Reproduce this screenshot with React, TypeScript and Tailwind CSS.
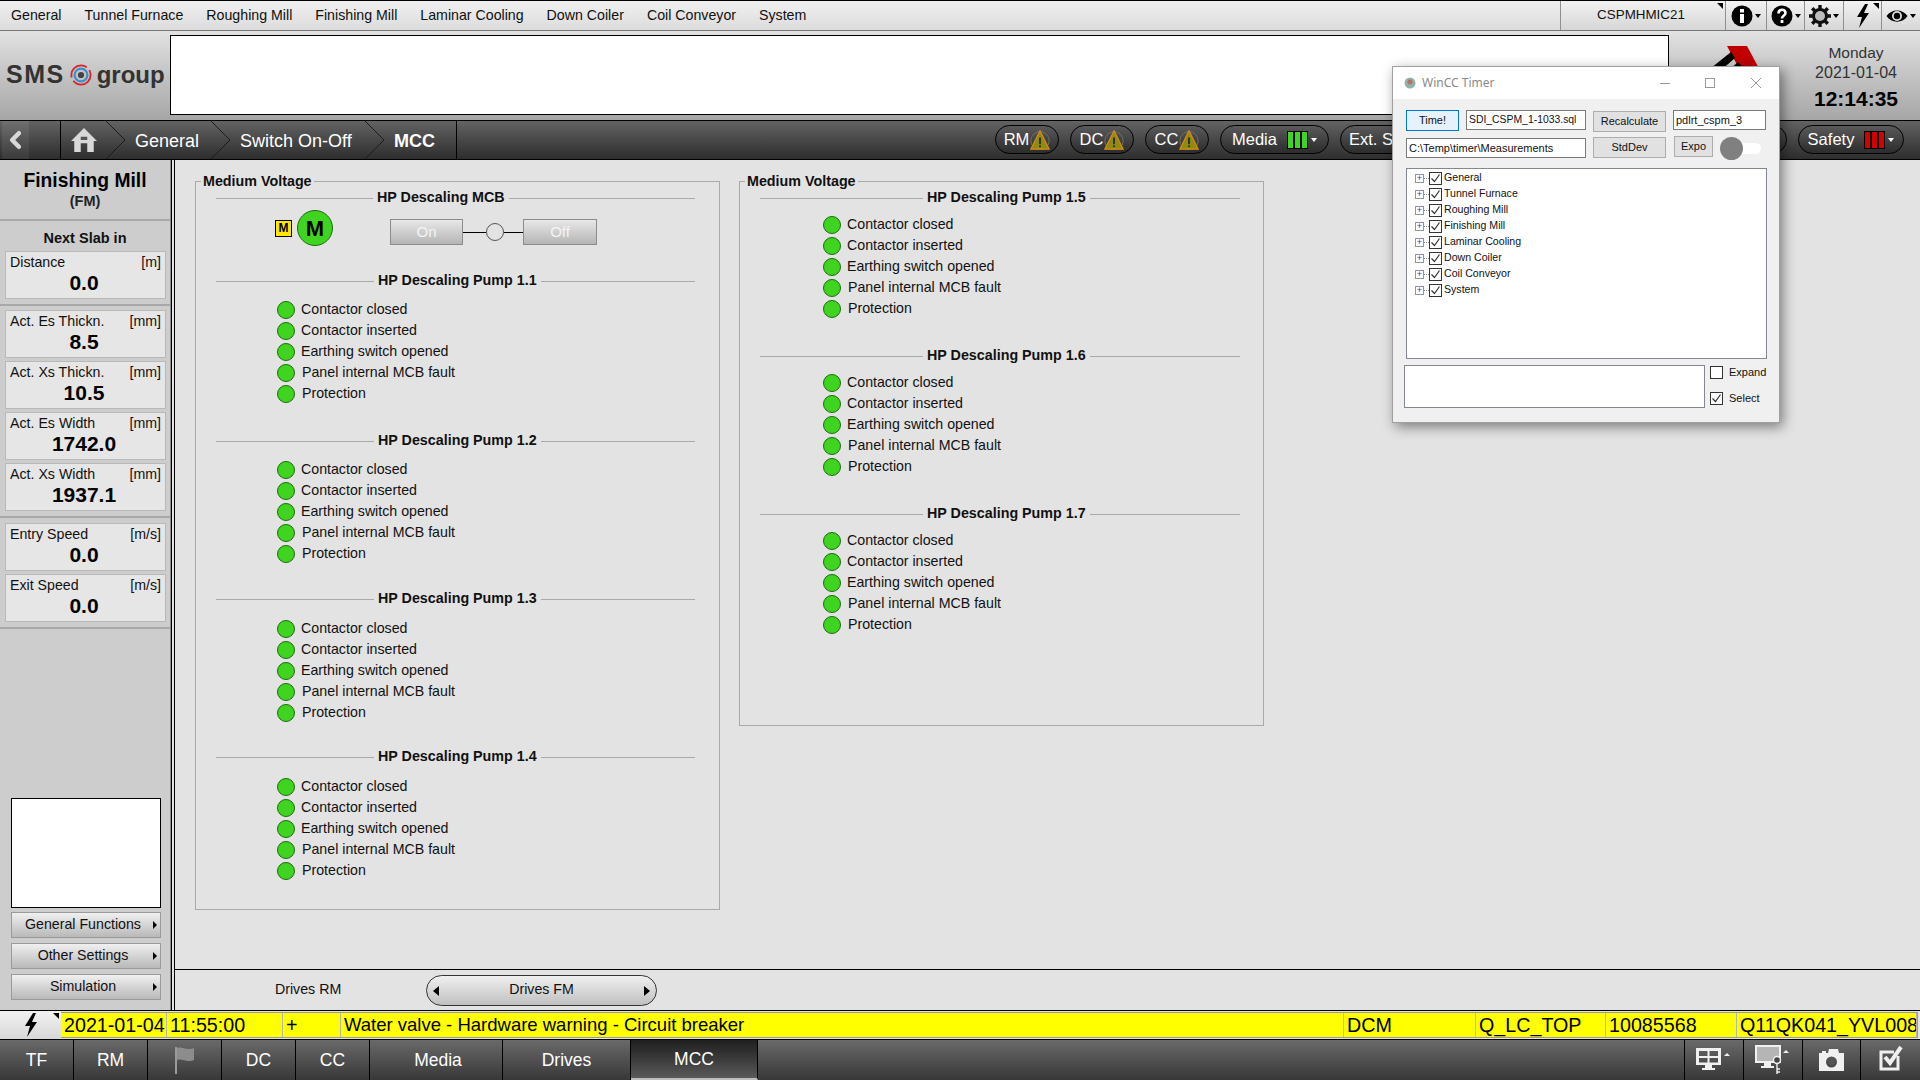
import { ChevronLeft } from "lucide-react";

const FONT = "[font-family:'Liberation_Sans',Arial,sans-serif]";

const MENU = ["General", "Tunnel Furnace", "Roughing Mill", "Finishing Mill", "Laminar Cooling", "Down Coiler", "Coil Conveyor", "System"];
const SIGNALS = ["Contactor closed", "Contactor inserted", "Earthing switch opened", "Panel internal MCB fault", "Protection"];
const TREE = ["General", "Tunnel Furnace", "Roughing Mill", "Finishing Mill", "Laminar Cooling", "Down Coiler", "Coil Conveyor", "System"];

function Corner() {
  return <span className="absolute top-[2px] right-[2px] w-0 h-0 border-t-[6px] border-l-[6px] border-t-black border-l-transparent" />;
}

function Caret() {
  return <span className="ml-[2px] mt-[1px] w-0 h-0 border-x-[3px] border-t-[4px] border-x-transparent border-t-black" />;
}

function TopTool({ children, width, corner }: { children: React.ReactNode; width: string; corner?: boolean }) {
  return (
    <div className={`relative flex items-center justify-center h-full border-l border-[#8f8f8f] bg-gradient-to-b from-[#f2f2f2] to-[#d6d6d6] ${width}`}>
      {children}
      {corner && <Corner />}
    </div>
  );
}

function Warn() {
  return (
    <svg width="20" height="20" viewBox="0 0 24 24" className="ml-[1px]">
      <circle cx="12" cy="13" r="11" fill="none" stroke="#777" strokeWidth="1" />
      <path d="M12 1 L23 23 H1 Z" fill="#8f8a12" stroke="#d98a17" strokeWidth="1.5" />
      <rect x="11" y="9" width="2" height="8" fill="#222" />
      <rect x="11" y="18.5" width="2" height="2" fill="#222" />
    </svg>
  );
}

function Pill({ children, width }: { children: React.ReactNode; width: string }) {
  return (
    <div className={`flex items-center justify-center h-[29px] rounded-full border border-black bg-gradient-to-b from-[#5a5a5a] to-[#2c2c2c] text-white text-[16.5px] shrink-0 ${width}`}>
      {children}
    </div>
  );
}

function Bars({ color }: { color: string }) {
  return (
    <span className="flex ml-[10px] gap-[2px] bg-black p-[1px]">
      <span className={`w-[5px] h-[16px] ${color}`} />
      <span className={`w-[5px] h-[16px] ${color}`} />
      <span className={`w-[5px] h-[16px] ${color}`} />
    </span>
  );
}

function DataCard({ label, unit, value }: { label: string; unit: string; value: string }) {
  return (
    <div className="mx-[5px] w-[161px] h-[48px] border border-[#b9b9b9] bg-[#e6e6e6]">
      <div className="flex justify-between px-[4px] pt-[2px] text-[14.2px] leading-[17px] text-[#111]">
        <span>{label}</span>
        <span>{unit}</span>
      </div>
      <div className="text-center text-[21px] leading-[24px] font-bold text-black pr-[3px]">{value}</div>
    </div>
  );
}

function SideButton({ label }: { label: string }) {
  return (
    <div className="relative mx-[11px] w-[150px] h-[26px] flex items-center justify-center pr-[6px] border border-[#9a9a9a] bg-gradient-to-b from-[#f0f0f0] to-[#b9b9b9] text-[14.2px] text-[#111]">
      {label}
      <span className="absolute right-[3px] top-[8px] w-0 h-0 border-y-[4px] border-l-[4px] border-y-transparent border-l-black" />
    </div>
  );
}

function Led() {
  return <span className="w-[18px] h-[18px] rounded-full bg-[#3fd41f] border border-[#1d6b10] shrink-0" />;
}

// the label starts at a fixed place, it is not centred on the rule
function Title({ label, lead }: { label: string; lead: string }) {
  return (
    <div className="flex items-center gap-[4px] h-[18px]">
      <span className={`h-px bg-[#a9a9a9] shrink-0 ${lead}`} />
      <span className="text-[14.3px] font-bold text-[#111]">{label}</span>
      <span className="flex-1 h-px bg-[#a9a9a9]" />
    </div>
  );
}

function PumpSection({ label, gap, height, lead, inset }: { label: string; gap: string; height: string; lead: string; inset: string }) {
  return (
    <section className={height}>
      <Title label={label} lead={lead} />
      <div className={`flex flex-col ${gap}`}>
        {SIGNALS.map((s, i) => (
          <div key={s} className={`flex items-center h-[21px] gap-[6px] text-[14.2px] text-[#111] ${inset}`}>
            <Led />
            <span className={i >= 3 ? "ml-[1px]" : ""}>{s}</span>
          </div>
        ))}
      </div>
    </section>
  );
}

function Legend({ children, className }: { children: React.ReactNode; className: string }) {
  return (
    <div className={`relative border border-[#a9a9a9] ${className}`}>
      <span className="absolute -top-[10px] left-[5px] px-[2px] bg-[#e3e3e3] text-[14.3px] leading-[18px] font-bold text-[#111]">Medium Voltage</span>
      {children}
    </div>
  );
}

function McbRow() {
  return (
    <div className="flex items-start h-[65px] pl-[59px]">
      <span className="mt-[13px] w-[17px] h-[17px] bg-[#ffe600] border border-black text-[12px] leading-[15px] font-bold text-center text-black">M</span>
      <span className="mt-[3px] ml-[5px] w-[36px] h-[36px] rounded-full bg-[#3fd41f] border border-[#1d6b10] flex items-center justify-center text-[22px] font-bold text-black">M</span>
      <span className="mt-[12px] ml-[57px] w-[73px] h-[26px] flex items-center justify-center border border-[#8c8c8c] bg-gradient-to-b from-[#e8e8e8] to-[#b5b5b5] text-[15px] text-[#f4f4f4]">On</span>
      <span className="mt-[25px] w-[23px] h-px bg-black" />
      <span className="mt-[16px] w-[18px] h-[18px] rounded-full border border-[#555] bg-[#e3e3e3]" />
      <span className="mt-[25px] w-[19px] h-px bg-black" />
      <span className="mt-[12px] w-[74px] h-[26px] flex items-center justify-center border border-[#8c8c8c] bg-gradient-to-b from-[#e8e8e8] to-[#b5b5b5] text-[15px] text-[#f4f4f4]">Off</span>
    </div>
  );
}

function Check({ checked }: { checked?: boolean }) {
  return (
    <span className="w-[13px] h-[13px] border border-[#333] bg-white flex items-center justify-center shrink-0">
      {checked && (
        <svg width="11" height="11" viewBox="0 0 11 11">
          <path d="M1.5 5.5 L4.5 8.5 L9.5 1.5" fill="none" stroke="#333" strokeWidth="1.2" />
        </svg>
      )}
    </span>
  );
}

function TimerWindow() {
  return (
    <div className="absolute left-[1392px] top-[66px] w-[388px] h-[357px] bg-[#f0f0f0] border border-[#a0a0a0] shadow-[3px_4px_12px_rgba(0,0,0,0.45)] text-[11px] text-[#111]">
      <div className="flex items-center h-[32px] bg-white pl-[10px]">
        <svg width="14" height="14" viewBox="0 0 14 14">
          <circle cx="7" cy="7" r="5.5" fill="#8fb5a8" />
          <circle cx="7" cy="6" r="2.5" fill="#b7706a" />
        </svg>
        <span className="ml-[5px] text-[12px] text-[#8a8a8a] [font-family:'Noto_Sans',sans-serif]">WinCC Timer</span>
        <svg width="101" height="14" viewBox="0 0 101 14" className="ml-auto mr-[18px]" stroke="#999" fill="none">
          <path d="M0 7.5 H10" />
          <rect x="45.5" y="2.5" width="9" height="9" />
          <path d="M91 2 L101 12 M101 2 L91 12" />
        </svg>
      </div>

      <div className="pl-[13px] pt-[11px] pr-[12px]">
        <div className="flex items-start h-[21px]">
          <div className="w-[53px] h-[21px] border border-[#0078d7] bg-[#e5f1fb] flex items-center justify-center">Time!</div>
          <div className="ml-[7px] w-[120px] h-[20px] border border-[#7a7a7a] bg-white pl-[2px] text-[10.4px] leading-[18px]">SDI_CSPM_1-1033.sql</div>
          <div className="ml-[7px] mt-[1px] w-[73px] h-[21px] border border-[#adadad] bg-[#e1e1e1] flex items-center justify-center">Recalculate</div>
          <div className="ml-[7px] w-[93px] h-[20px] border border-[#7a7a7a] bg-white pl-[2px] leading-[18px]">pdlrt_cspm_3</div>
        </div>
        <div className="flex items-start mt-[6px] h-[23px]">
          <div className="mt-[1px] w-[180px] h-[20px] border border-[#7a7a7a] bg-white pl-[2px] leading-[18px]">C:\Temp\timer\Measurements</div>
          <div className="ml-[7px] w-[73px] h-[21px] border border-[#adadad] bg-[#e1e1e1] flex items-center justify-center">StdDev</div>
          <div className="ml-[8px] -mt-[1px] w-[39px] h-[21px] border border-[#adadad] bg-[#e1e1e1] flex items-center justify-center">Expo</div>
          <div className="relative ml-[7px] w-[41px] h-[23px]">
            <span className="absolute left-[10px] top-[6px] w-[31px] h-[11px] rounded-full bg-white" />
            <span className="absolute left-0 top-0 w-[23px] h-[23px] rounded-full bg-[#808080]" />
          </div>
        </div>

        <div className="mt-[8px] h-[191px] w-[361px] border border-[#828790] bg-white pl-[8px] pt-[1px] text-[10.6px]">
          {TREE.map((t) => (
            <div key={t} className="flex items-center h-[16px]">
              <span className="w-[9px] h-[9px] border border-[#8a96a8] flex items-center justify-center text-[#27408b] text-[9px] leading-[7px]">+</span>
              <span className="w-[5px] border-t border-dotted border-[#888]" />
              <Check checked />
              <span className="ml-[2px]">{t}</span>
            </div>
          ))}
        </div>

        <div className="flex mt-[6px] -ml-[2px]">
          <div className="w-[301px] h-[43px] border border-[#828790] bg-white" />
          <div className="ml-[5px] flex flex-col gap-[13px] pt-[1px] leading-[13px]">
            <div className="flex items-center gap-[6px]"><Check /><span>Expand</span></div>
            <div className="flex items-center gap-[6px]"><Check checked /><span>Select</span></div>
          </div>
        </div>
      </div>
    </div>
  );
}

function BottomTab({ children, width, active }: { children: React.ReactNode; width: string; active?: boolean }) {
  return (
    <div
      className={`flex items-center justify-center h-full border-r border-black text-white text-[17.5px] ${width} ${
        active
          ? "bg-gradient-to-b from-[#1f1f1f] to-[#5a5a5a] border-b-2 border-b-[#bdbdbd]"
          : "bg-gradient-to-b from-[#6a6a6a] to-[#383838]"
      }`}
    >
      {children}
    </div>
  );
}

const ALARM_COLS = [
  ["w-[106px]", "2021-01-04"],
  ["w-[116px]", "11:55:00"],
  ["w-[58px]", "+"],
  ["w-[1003px] text-[18.5px]", "Water valve - Hardware warning - Circuit breaker"],
  ["w-[132px]", "DCM"],
  ["w-[130px]", "Q_LC_TOP"],
  ["w-[131px]", "10085568"],
  ["flex-1", "Q11QK041_YVL008"],
];

export default function App() {
  return (
    <div className={`relative w-[1920px] h-[1080px] overflow-hidden flex flex-col bg-[#e3e3e3] ${FONT}`}>
      {/* top menu */}
      <div className="flex h-[31px] border-t border-black border-b border-b-[#777] bg-gradient-to-b from-[#f0f0f0] to-[#dcdcdc] text-[14.2px] text-[#111] shrink-0">
        <div className="flex flex-1 items-center pl-[11px] gap-[23px]">
          {MENU.map((m) => (
            <span key={m}>{m}</span>
          ))}
        </div>
        <TopTool width="w-[165px]" corner><span className="text-[13.4px] pr-[4px]">CSPMHMIC21</span></TopTool>
        <TopTool width="w-[41px]">
          <svg width="22" height="22" viewBox="0 0 22 22"><circle cx="11" cy="11" r="10.5" fill="#000" /><rect x="9" y="9" width="4" height="9" fill="#fff" /><rect x="9" y="4" width="4" height="3.5" fill="#fff" /></svg>
          <Caret />
        </TopTool>
        <TopTool width="w-[38px]">
          <svg width="22" height="22" viewBox="0 0 22 22"><circle cx="11" cy="11" r="10.5" fill="#000" /><path d="M7.5 8.5 C7.5 3.5 14.5 3.5 14.5 8 C14.5 10.5 11 10.5 11 13.5" fill="none" stroke="#fff" strokeWidth="2.6" /><rect x="9.6" y="15" width="2.8" height="3" fill="#fff" /></svg>
          <Caret />
        </TopTool>
        <TopTool width="w-[39px]">
          <svg width="22" height="22" viewBox="0 0 22 22">
            <circle cx="11" cy="11" r="8" fill="#111" />
            <path d="M11 0 V22 M0 11 H22 M3.2 3.2 L18.8 18.8 M18.8 3.2 L3.2 18.8" stroke="#111" strokeWidth="3.4" />
            <circle cx="11" cy="11" r="5" fill="#bdbdbd" />
          </svg>
          <Caret />
        </TopTool>
        <TopTool width="w-[38px]" corner>
          <svg width="16" height="24" viewBox="0 0 16 24"><path d="M10 0 L2 13 H7 L4 24 L14 9 H9 L13 0 Z" fill="#000" /></svg>
        </TopTool>
        <TopTool width="w-[39px]">
          <svg width="22" height="16" viewBox="0 0 22 16"><path d="M0.5 8 C5 0.5 17 0.5 21.5 8 C17 15.5 5 15.5 0.5 8 Z" fill="#000" /><circle cx="11" cy="8" r="5" fill="#ddd" /><circle cx="11" cy="8" r="3.2" fill="#000" /></svg>
          <Caret />
        </TopTool>
      </div>

      {/* logo strip */}
      <div className="flex h-[89px] shrink-0 bg-gradient-to-b from-[#e2e2e2] to-[#a6a6a6]">
        <div className="w-[170px] flex items-center pl-[6px] pb-[1px] text-[#333] font-bold">
          <span className="text-[25px] tracking-[1.5px]">SMS</span>
          <svg width="22" height="22" viewBox="0 0 24 24" className="ml-[5px] mr-[5px] shrink-0">
            <circle cx="12" cy="12" r="10.5" fill="none" stroke="#d8232a" strokeWidth="2" strokeDasharray="26 4" />
            <circle cx="12" cy="12" r="7" fill="none" stroke="#3f8fd0" strokeWidth="2.4" />
            <circle cx="12" cy="12" r="3.4" fill="#444" />
          </svg>
          <span className="text-[24px]">group</span>
        </div>
        <div className="w-[1499px] h-[80px] mt-[4px] bg-white border border-black" />
        <div className="relative flex-1">
          <svg width="70" height="40" viewBox="0 0 70 40" className="absolute left-[25px] top-[13px]">
            <path d="M33 2 H53 L68 30 H48 Z" fill="#c00000" />
            <path d="M37 8 L41 14 L18 34 L12 28 Z M44 18 L50 24 L34 38 L26 34 Z" fill="#000" />
          </svg>
          <div className="absolute right-0 top-[12px] w-[128px] flex flex-col items-center">
            <span className="text-[15.5px] leading-[20px] text-[#333]">Monday</span>
            <span className="text-[16px] leading-[20px] text-[#333]">2021-01-04</span>
            <span className="text-[21px] leading-[32px] font-bold text-black">12:14:35</span>
          </div>
        </div>
      </div>

      {/* breadcrumb */}
      <div className="flex items-center h-[40px] shrink-0 border-y border-black bg-gradient-to-b from-[#636363] to-[#2e2e2e] text-white text-[18px]">
        <div className="w-[61px] h-full flex items-center border-r border-black pl-[2px]">
          <div className="w-[27px] h-full flex items-center justify-center bg-gradient-to-b from-[#707070] to-[#3a3a3a]">
            <ChevronLeft size={30} strokeWidth={4} color="#d8d8d8" />
          </div>
        </div>
        <div className="relative w-[396px] h-full border-r border-black">
          <svg width="26" height="26" viewBox="0 0 24 24" className="absolute left-[10px] top-[6px]">
            <path d="M12 1 L24 13 H21 V23 H15 V15 H9 V23 H3 V13 H0 Z" fill="#d8d8d8" />
            <rect x="9" y="9" width="6" height="3" fill="#555" />
          </svg>
          <svg width="396" height="38" viewBox="0 0 396 38" className="absolute left-0 top-0" fill="none" stroke="#1b1b1b">
            <path d="M45 0 L64 19 L45 38 M150 0 L169 19 L150 38 M304 0 L323 19 L304 38" />
          </svg>
          <span className="absolute left-[74px] top-[7px]">General</span>
          <span className="absolute left-[179px] top-[7px]">Switch On-Off</span>
          <span className="absolute left-[333px] top-[7px] font-bold">MCC</span>
        </div>
        <div className="flex items-center ml-[538px] -mt-[1px] gap-[11px]">
          <Pill width="w-[64px]">RM<Warn /></Pill>
          <Pill width="w-[64px]">DC<Warn /></Pill>
          <Pill width="w-[64px]">CC<Warn /></Pill>
          <Pill width="w-[109px]">Media<Bars color="bg-[#3fd41f]" /><span className="ml-[3px] w-0 h-0 border-x-[3px] border-t-[4px] border-x-transparent border-t-white" /></Pill>
          <Pill width="w-[447px] justify-start pl-[8px]">Ext. S</Pill>
          <Pill width="w-[106px]">Safety<Bars color="bg-[#d40000]" /><span className="ml-[3px] w-0 h-0 border-x-[3px] border-t-[4px] border-x-transparent border-t-white" /></Pill>
        </div>
      </div>

      {/* main */}
      <div className="flex flex-1 min-h-0">
        <aside className="w-[171px] h-full bg-[#cdcdcd] border-r border-[#8c8c8c] flex flex-col shrink-0">
          <div className="h-[61px] border-b-2 border-[#a8a8a8] text-center pt-[9px]">
            <div className="text-[19.3px] leading-[24px] font-bold text-black">Finishing Mill</div>
            <div className="text-[14.5px] leading-[17px] font-bold text-[#222]">(FM)</div>
          </div>
          <div className="text-center text-[14.5px] leading-[18px] font-bold text-[#111] pt-[8px] pb-[4px]">Next Slab in</div>
          <DataCard label="Distance" unit="[m]" value="0.0" />
          <div className="mt-[5px] h-[2px] bg-[#a8a8a8]" />
          <div className="flex flex-col gap-[3px] mt-[4px]">
            <DataCard label="Act. Es Thickn." unit="[mm]" value="8.5" />
            <DataCard label="Act. Xs Thickn." unit="[mm]" value="10.5" />
            <DataCard label="Act. Es Width" unit="[mm]" value="1742.0" />
            <DataCard label="Act. Xs Width" unit="[mm]" value="1937.1" />
          </div>
          <div className="mt-[5px] h-[2px] bg-[#a8a8a8]" />
          <div className="flex flex-col gap-[3px] mt-[5px]">
            <DataCard label="Entry Speed" unit="[m/s]" value="0.0" />
            <DataCard label="Exit Speed" unit="[m/s]" value="0.0" />
          </div>
          <div className="mt-[5px] h-[2px] bg-[#a8a8a8]" />
          <div className="mx-[11px] mt-[169px] w-[150px] h-[110px] bg-white border border-black" />
          <div className="flex flex-col gap-[5px] mt-[4px]">
            <SideButton label="General Functions" />
            <SideButton label="Other Settings" />
            <SideButton label="Simulation" />
          </div>
        </aside>
        <div className="w-[4px] bg-[#e3e3e3] border-r-[1px] border-black border-l border-l-black shrink-0" />

        <div className="flex-1 flex flex-col min-w-0">
          <div className="flex flex-1 items-start pl-[20px] pt-[21px] gap-[19px] border-b border-black">
            <Legend className="w-[525px] h-[729px] pl-[20px] pr-[24px] pt-[7px]">
              <Title label="HP Descaling MCB" lead="w-[157px]" />
              <McbRow />
              <PumpSection label="HP Descaling Pump 1.1" lead="w-[158px]" inset="pl-[61px]" gap="mt-[9px]" height="h-[160px]" />
              <PumpSection label="HP Descaling Pump 1.2" lead="w-[158px]" inset="pl-[61px]" gap="mt-[9px]" height="h-[158px]" />
              <PumpSection label="HP Descaling Pump 1.3" lead="w-[158px]" inset="pl-[61px]" gap="mt-[10px]" height="h-[158px]" />
              <PumpSection label="HP Descaling Pump 1.4" lead="w-[158px]" inset="pl-[61px]" gap="mt-[10px]" height="h-[130px]" />
            </Legend>
            <Legend className="w-[525px] h-[545px] pl-[20px] pr-[23px] pt-[7px]">
              <PumpSection label="HP Descaling Pump 1.5" lead="w-[163px]" inset="pl-[63px]" gap="mt-[7px]" height="h-[158px]" />
              <PumpSection label="HP Descaling Pump 1.6" lead="w-[163px]" inset="pl-[63px]" gap="mt-[7px]" height="h-[158px]" />
              <PumpSection label="HP Descaling Pump 1.7" lead="w-[163px]" inset="pl-[63px]" gap="mt-[7px]" height="h-[130px]" />
            </Legend>
          </div>
          <div className="h-[40px] flex items-center text-[14.2px] text-[#111] shrink-0">
            <span className="ml-[100px] w-[151px]">Drives RM</span>
            <div className="relative w-[231px] h-[31px] rounded-full border border-[#333] bg-gradient-to-b from-[#f0f0f0] to-[#c0c0c0] flex items-center justify-center">
              Drives FM
              <span className="absolute left-[6px] top-[10px] w-0 h-0 border-y-[5px] border-r-[6px] border-y-transparent border-r-black" />
              <span className="absolute right-[6px] top-[10px] w-0 h-0 border-y-[5px] border-l-[6px] border-y-transparent border-l-black" />
            </div>
          </div>
        </div>
      </div>

      {/* alarm line */}
      <div className="flex h-[30px] shrink-0 border-y border-black bg-[#e3e3e3]">
        <div className="relative w-[61px] shrink-0 flex items-center justify-center bg-gradient-to-b from-[#f2f2f2] to-[#d8d8d8]">
          <svg width="16" height="24" viewBox="0 0 16 24"><path d="M10 0 L2 13 H7 L4 24 L14 9 H9 L13 0 Z" fill="#000" /></svg>
          <Corner />
        </div>
        <div className="flex flex-1 min-w-0 my-[1px] mr-[2px] border-y border-r border-[#9a9a9a] text-[19.7px] leading-[24px] text-black">
          {ALARM_COLS.map(([w, t]) => (
            <div key={t} className={`${w} shrink-0 h-full bg-[#ffff00] border-r border-[#b5b5b5] pl-[3px] overflow-hidden whitespace-nowrap`}>
              {t}
            </div>
          ))}
        </div>
      </div>

      {/* bottom nav */}
      <div className="flex h-[40px] shrink-0 bg-gradient-to-b from-[#6a6a6a] to-[#383838]">
        <BottomTab width="w-[74px]">TF</BottomTab>
        <BottomTab width="w-[74px]">RM</BottomTab>
        <BottomTab width="w-[74px]">
          <svg width="22" height="28" viewBox="0 0 22 28"><rect x="1" y="1" width="2" height="27" fill="#9a9a9a" /><path d="M3 2 C8 0 12 5 20 2 V14 C12 17 8 12 3 14 Z" fill="#8c8c8c" /></svg>
        </BottomTab>
        <BottomTab width="w-[74px]">DC</BottomTab>
        <BottomTab width="w-[74px]">CC</BottomTab>
        <div className="w-[4px]" />
        <BottomTab width="w-[129px]">Media</BottomTab>
        <BottomTab width="w-[128px]">Drives</BottomTab>
        <BottomTab width="w-[127px]" active>MCC</BottomTab>
        <div className="flex-1 border-r border-black" />
        <BottomTab width="w-[59px]">
          <svg width="36" height="24" viewBox="0 0 36 24" fill="#f0f0f0">
            <path fillRule="evenodd" d="M0 0 H25 V17 H0 Z M3 3 V8 H11.5 V3 Z M13.5 3 V8 H22 V3 Z M3 10 V14.5 H11.5 V10 Z M13.5 10 V14.5 H22 V10 Z" />
            <rect x="9" y="17" width="7" height="3" />
            <rect x="6" y="20" width="13" height="2" />
            <path d="M28 8 L31 5 L34 8 Z" />
          </svg>
        </BottomTab>
        <BottomTab width="w-[59px]">
          <svg width="36" height="30" viewBox="0 0 36 30">
            <rect x="1" y="1" width="24" height="16" fill="#b5b5b5" stroke="#f0f0f0" strokeWidth="2" />
            <rect x="9" y="18" width="7" height="3" fill="#f0f0f0" />
            <rect x="6" y="21" width="13" height="2" fill="#f0f0f0" />
            <circle cx="22" cy="15" r="3.5" fill="#444" stroke="#f0f0f0" strokeWidth="1.4" />
            <path d="M22 18 V29 M22 24 H25 M22 27 H25" stroke="#f0f0f0" strokeWidth="1.4" />
            <path d="M28 8 L31 5 L34 8 Z" fill="#f0f0f0" />
          </svg>
        </BottomTab>
        <BottomTab width="w-[58px]">
          <svg width="26" height="22" viewBox="0 0 26 22">
            <path fillRule="evenodd" d="M0 4 H3 V2 H7 V4 H9 L10 0 H19 L20 4 H25 V22 H0 Z M12.5 7.5 A5.5 5.5 0 1 0 12.5 18.5 A5.5 5.5 0 1 0 12.5 7.5 Z" fill="#f0f0f0" />
            <circle cx="12.5" cy="13" r="3" fill="#555" />
          </svg>
        </BottomTab>
        <BottomTab width="w-[59px] border-r-0">
          <svg width="26" height="30" viewBox="0 0 26 30" fill="none">
            <path d="M20 11 V24 H3 V7 H16" stroke="#f0f0f0" strokeWidth="3" />
            <path d="M7 12 L12 18 L23 2" stroke="#f0f0f0" strokeWidth="4" />
          </svg>
        </BottomTab>
      </div>

      <TimerWindow />
    </div>
  );
}
